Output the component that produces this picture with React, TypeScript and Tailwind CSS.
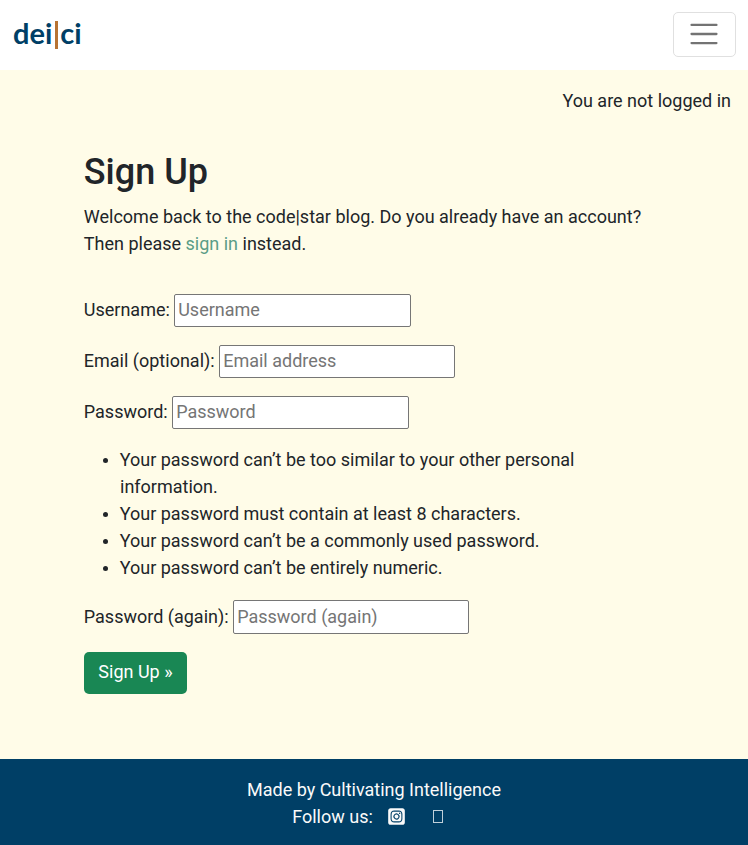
import { FaSquareInstagram } from "react-icons/fa6";

type FieldProps = { id: string; label: string; placeholder: string; type: string; width: string; height: string; inputWidth: string };

function Field({ id, label, placeholder, type, width, height, inputWidth }: FieldProps) {
  return (
    <div className={`flex items-center ${height}`}>
      <label htmlFor={id} className={`shrink-0 pb-[2px] -indent-[0.2px] whitespace-nowrap ${width}`}>{label}</label>
      <input
        id={id}
        type={type}
        placeholder={placeholder}
        className={`h-full rounded-[2px] border border-[#767676] bg-white px-[3.2px] pb-[2px] placeholder:text-[#757575] ${inputWidth}`}
      />
    </div>
  );
}

const rules = [
  "Your password can’t be too similar to your other personal information.",
  "Your password must contain at least 8 characters.",
  "Your password can’t be a commonly used password.",
  "Your password can’t be entirely numeric.",
];

export default function App() {
  return (
    <div className="flex h-[845px] flex-col bg-[#fffce8] font-['Roboto',sans-serif] text-[18px] leading-[27px] text-[#212529]">
      <header className="flex h-[70px] shrink-0 items-start justify-between bg-white px-3 pt-3">
        <a href="#" className="flex pl-px font-['Lato',sans-serif] text-[29px] leading-[41px] font-bold text-[#003f66]">
          <span>dei</span>
          <span className="mt-[9px] mr-[2px] ml-[3px] h-[28px] w-[3px] bg-[#b87333]" />
          <span>ci</span>
        </a>
        <button aria-label="Toggle navigation" className="flex h-[45px] w-[63px] items-center justify-center rounded-[5px] border border-[#e0e0e0] pr-[2px] pb-[2px]">
          <svg viewBox="0 0 30 30" className="h-[34px] w-[34px]" fill="none">
            <path d="M4 7h22M4 15h22M4 23h22" stroke="#737373" strokeWidth="2" strokeLinecap="round" strokeMiterlimit="10" />
          </svg>
        </button>
      </header>
      <p className="mt-[17px] pr-[17px] text-right">You are not logged in</p>
      <main className="mt-[37px] flex flex-col items-start px-[84px]">
        <h1 className="text-[36px] leading-[43px] font-medium -indent-[0.2px]">Sign Up</h1>
        <p className="mt-[9px] -ml-[0.2px]">
          Welcome back to the code|star blog. Do you already have an account?
          <br />
          Then please <a href="#" className="text-[#5a9d86]">sign in</a> instead.
        </p>
        <form className="mt-[37px] flex flex-col items-start">
          <div className="flex flex-col gap-[18px]">
            <Field id="username" label="Username:" placeholder="Username" type="text" width="w-[90px]" height="h-[33px]" inputWidth="w-[237px]" />
            <Field id="email" label="Email (optional):" placeholder="Email address" type="email" width="w-[135px]" height="h-[33px]" inputWidth="w-[236px]" />
            <Field id="password" label="Password:" placeholder="Password" type="password" width="w-[88px]" height="h-[33px]" inputWidth="w-[237px]" />
          </div>
          <ul className="mt-[17px] w-[580px] list-disc pl-9">
            {rules.map((rule) => (
              <li key={rule} className="max-w-[500px] -indent-[0.3px] marker:text-[16px]">{rule}</li>
            ))}
          </ul>
          <div className="mt-[19px]">
            <Field id="password2" label="Password (again):" placeholder="Password (again)" type="password" width="w-[149px]" height="h-[34px]" inputWidth="w-[236px]" />
          </div>
          <button type="button" className="mt-[18px] h-[42px] w-[103px] rounded-[5px] bg-[#198754] pb-[3px] text-white">Sign Up »</button>
        </form>
      </main>
      <footer className="mt-auto flex h-[86px] shrink-0 flex-col items-center bg-[#003f66] pt-[17px] text-[#fafafa]">
        <p>Made by Cultivating Intelligence</p>
        <div className="flex items-center">
          <span>Follow us:</span>
          <FaSquareInstagram className="mb-px ml-[14px] h-[19px] w-[19px]" />
          <span className="mr-[13px] ml-[27px] h-[13px] w-[10px] border border-[#c0d0da]" />
        </div>
      </footer>
    </div>
  );
}
